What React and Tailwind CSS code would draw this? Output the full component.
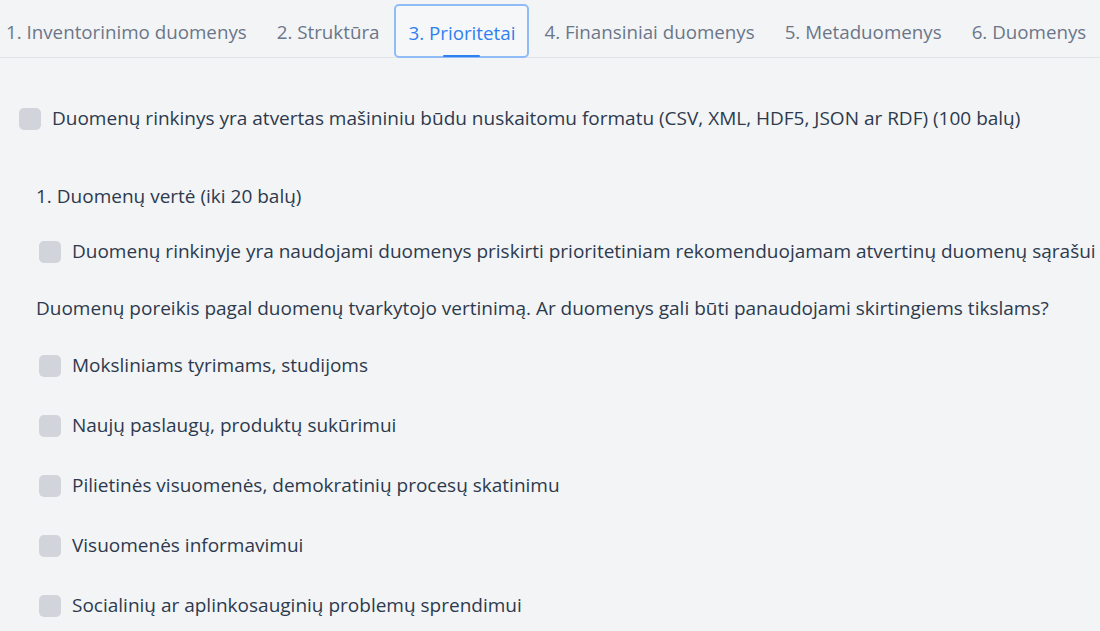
import React from "react";

const tabs = [
  "1. Inventorinimo duomenys",
  "2. Struktūra",
  "3. Prioritetai",
  "4. Finansiniai duomenys",
  "5. Metaduomenys",
  "6. Duomenys",
];

function Box() {
  return <span className="w-[22px] h-[22px] rounded-[5px] bg-[#d1d5db] shrink-0" />;
}

function Check({ children, className = "" }) {
  return (
    <label className={`flex items-center gap-[11px] ${className}`}>
      <Box />
      <span>{children}</span>
    </label>
  );
}

export default function App() {
  return (
    <div
      className="w-[1100px] h-[631px] overflow-hidden bg-[#f3f4f6] text-[19px] leading-[27px] text-[#2d3a4d]"
      style={{ fontFamily: '"Open Sans", "Noto Sans", sans-serif' }}
    >
      <div className="flex items-end h-[58px] border-b border-[#e2e4e8] ml-[-9px] whitespace-nowrap text-[18.75px]">
        {tabs.map((t, i) =>
          i === 2 ? (
            <div
              key={t}
              className="relative h-[54px] pt-[3px] px-[12px] flex items-center border-2 border-[#8fbcf6] rounded-[5px] text-[#2f7ff0] bg-[#f6f7f9] -mb-px"
            >
              {t}
              <span className="absolute left-[47px] bottom-[-1px] w-[37px] h-[2px] bg-[#2f7ff0] rounded" />
            </div>
          ) : (
            <div key={t} className="h-[54px] pt-[3px] px-[15px] flex items-center text-[#6b7689]">
              {t}
            </div>
          )
        )}
      </div>

      <div className="pl-[19px] pt-[47px]">
        <Check>
          Duomenų rinkinys yra atvertas mašininiu būdu nuskaitomu formatu (CSV, XML, HDF5, JSON ar RDF) (100 balų)
        </Check>

        <div className="pl-[17px]">
          <div className="mt-[51px]">1. Duomenų vertė (iki 20 balų)</div>
          <Check className="mt-[28px] ml-[3px]">
            Duomenų rinkinyje yra naudojami duomenys priskirti prioritetiniam rekomenduojamam atvertinų duomenų sąrašui
          </Check>
          <div className="mt-[30px]">
            Duomenų poreikis pagal duomenų tvarkytojo vertinimą. Ar duomenys gali būti panaudojami skirtingiems tikslams?
          </div>
          <div className="ml-[3px] mt-[30px] flex flex-col gap-[33px]">
            <Check>Moksliniams tyrimams, studijoms</Check>
            <Check>Naujų paslaugų, produktų sukūrimui</Check>
            <Check>Pilietinės visuomenės, demokratinių procesų skatinimu</Check>
            <Check>Visuomenės informavimui</Check>
            <Check>Socialinių ar aplinkosauginių problemų sprendimui</Check>
          </div>
        </div>
      </div>
    </div>
  );
}
